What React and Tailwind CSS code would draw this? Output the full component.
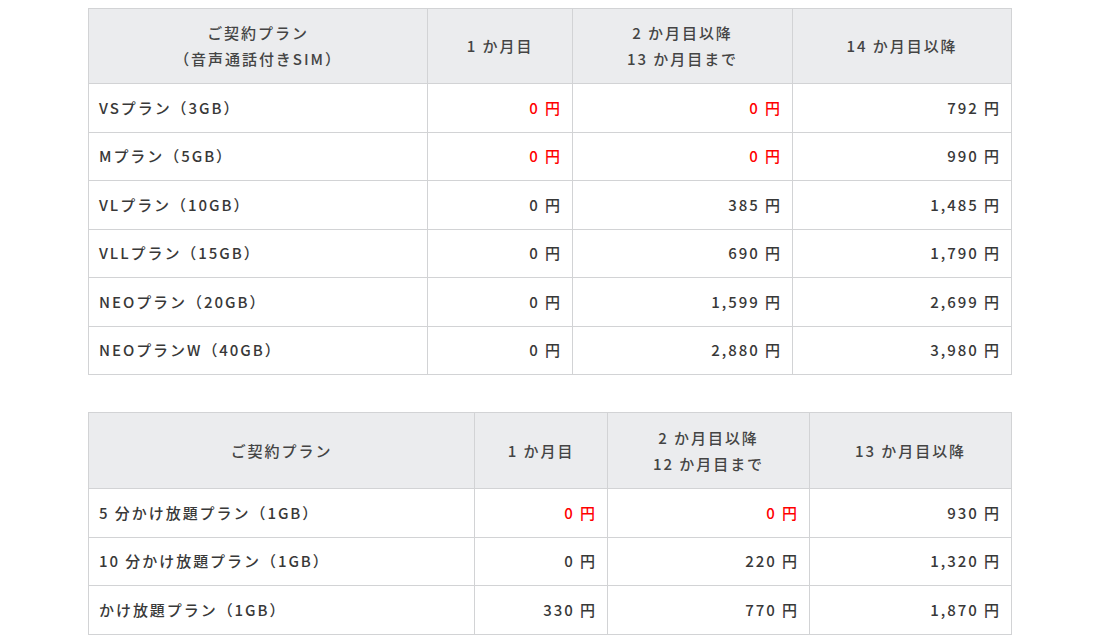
const font = { fontFamily: '"Noto Sans CJK JP", "Noto Sans", sans-serif' }

const voicePlans = [
  { name: 'VSプラン（3GB）', m1: '0 円', m2: '0 円', m3: '792 円', red: true },
  { name: 'Mプラン（5GB）', m1: '0 円', m2: '0 円', m3: '990 円', red: true },
  { name: 'VLプラン（10GB）', m1: '0 円', m2: '385 円', m3: '1,485 円' },
  { name: 'VLLプラン（15GB）', m1: '0 円', m2: '690 円', m3: '1,790 円' },
  { name: 'NEOプラン（20GB）', m1: '0 円', m2: '1,599 円', m3: '2,699 円' },
  { name: 'NEOプランW（40GB）', m1: '0 円', m2: '2,880 円', m3: '3,980 円' },
]

const callPlans = [
  { name: '5 分かけ放題プラン（1GB）', m1: '0 円', m2: '0 円', m3: '930 円', red: true },
  { name: '10 分かけ放題プラン（1GB）', m1: '0 円', m2: '220 円', m3: '1,320 円' },
  { name: 'かけ放題プラン（1GB）', m1: '330 円', m2: '770 円', m3: '1,870 円' },
]

const th = 'border border-[#d2d3d5] bg-[#ebecee] px-[10px] py-[11px] font-medium text-[#444] text-center leading-[26px]'
const td = 'border border-[#d2d3d5] px-[10px] h-[48.5px] leading-[24px] font-medium'

function PlanTable({ head, widths, rows, headH }) {
  return (
    <table className="w-[923px] table-fixed border-collapse text-[15px] tracking-[0.13em] text-[#383838]" style={font}>
      <colgroup>
        {widths.map((w, i) => <col key={i} style={{ width: w }} />)}
      </colgroup>
      <thead>
        <tr className={headH}>
          {head.map((h, i) => (
            <th key={i} className={th}>
              {h.map((line, j) => <div key={j}>{line}</div>)}
            </th>
          ))}
        </tr>
      </thead>
      <tbody>
        {rows.map((r) => (
          <tr key={r.name}>
            <td className={`${td} text-left`}>{r.name}</td>
            <td className={`${td} text-right ${r.red ? 'text-[#ff0000]' : ''}`}>{r.m1}</td>
            <td className={`${td} text-right ${r.red ? 'text-[#ff0000]' : ''}`}>{r.m2}</td>
            <td className={`${td} text-right`}>{r.m3}</td>
          </tr>
        ))}
      </tbody>
    </table>
  )
}

export default function App() {
  return (
    <div className="min-h-screen bg-white pt-[8px] pl-[88px]">
      <PlanTable
        head={[['ご契約プラン', '（音声通話付きSIM）'], ['1 か月目'], ['2 か月目以降', '13 か月目まで'], ['14 か月目以降']]}
        widths={['339px', '145px', '220px', '219px']}
        rows={voicePlans}
        headH="h-[75px]"
      />
      <div className="h-[37px]" />
      <PlanTable
        head={[['ご契約プラン'], ['1 か月目'], ['2 か月目以降', '12 か月目まで'], ['13 か月目以降']]}
        widths={['386px', '133px', '202px', '202px']}
        rows={callPlans}
        headH="h-[76px]"
      />
    </div>
  )
}
